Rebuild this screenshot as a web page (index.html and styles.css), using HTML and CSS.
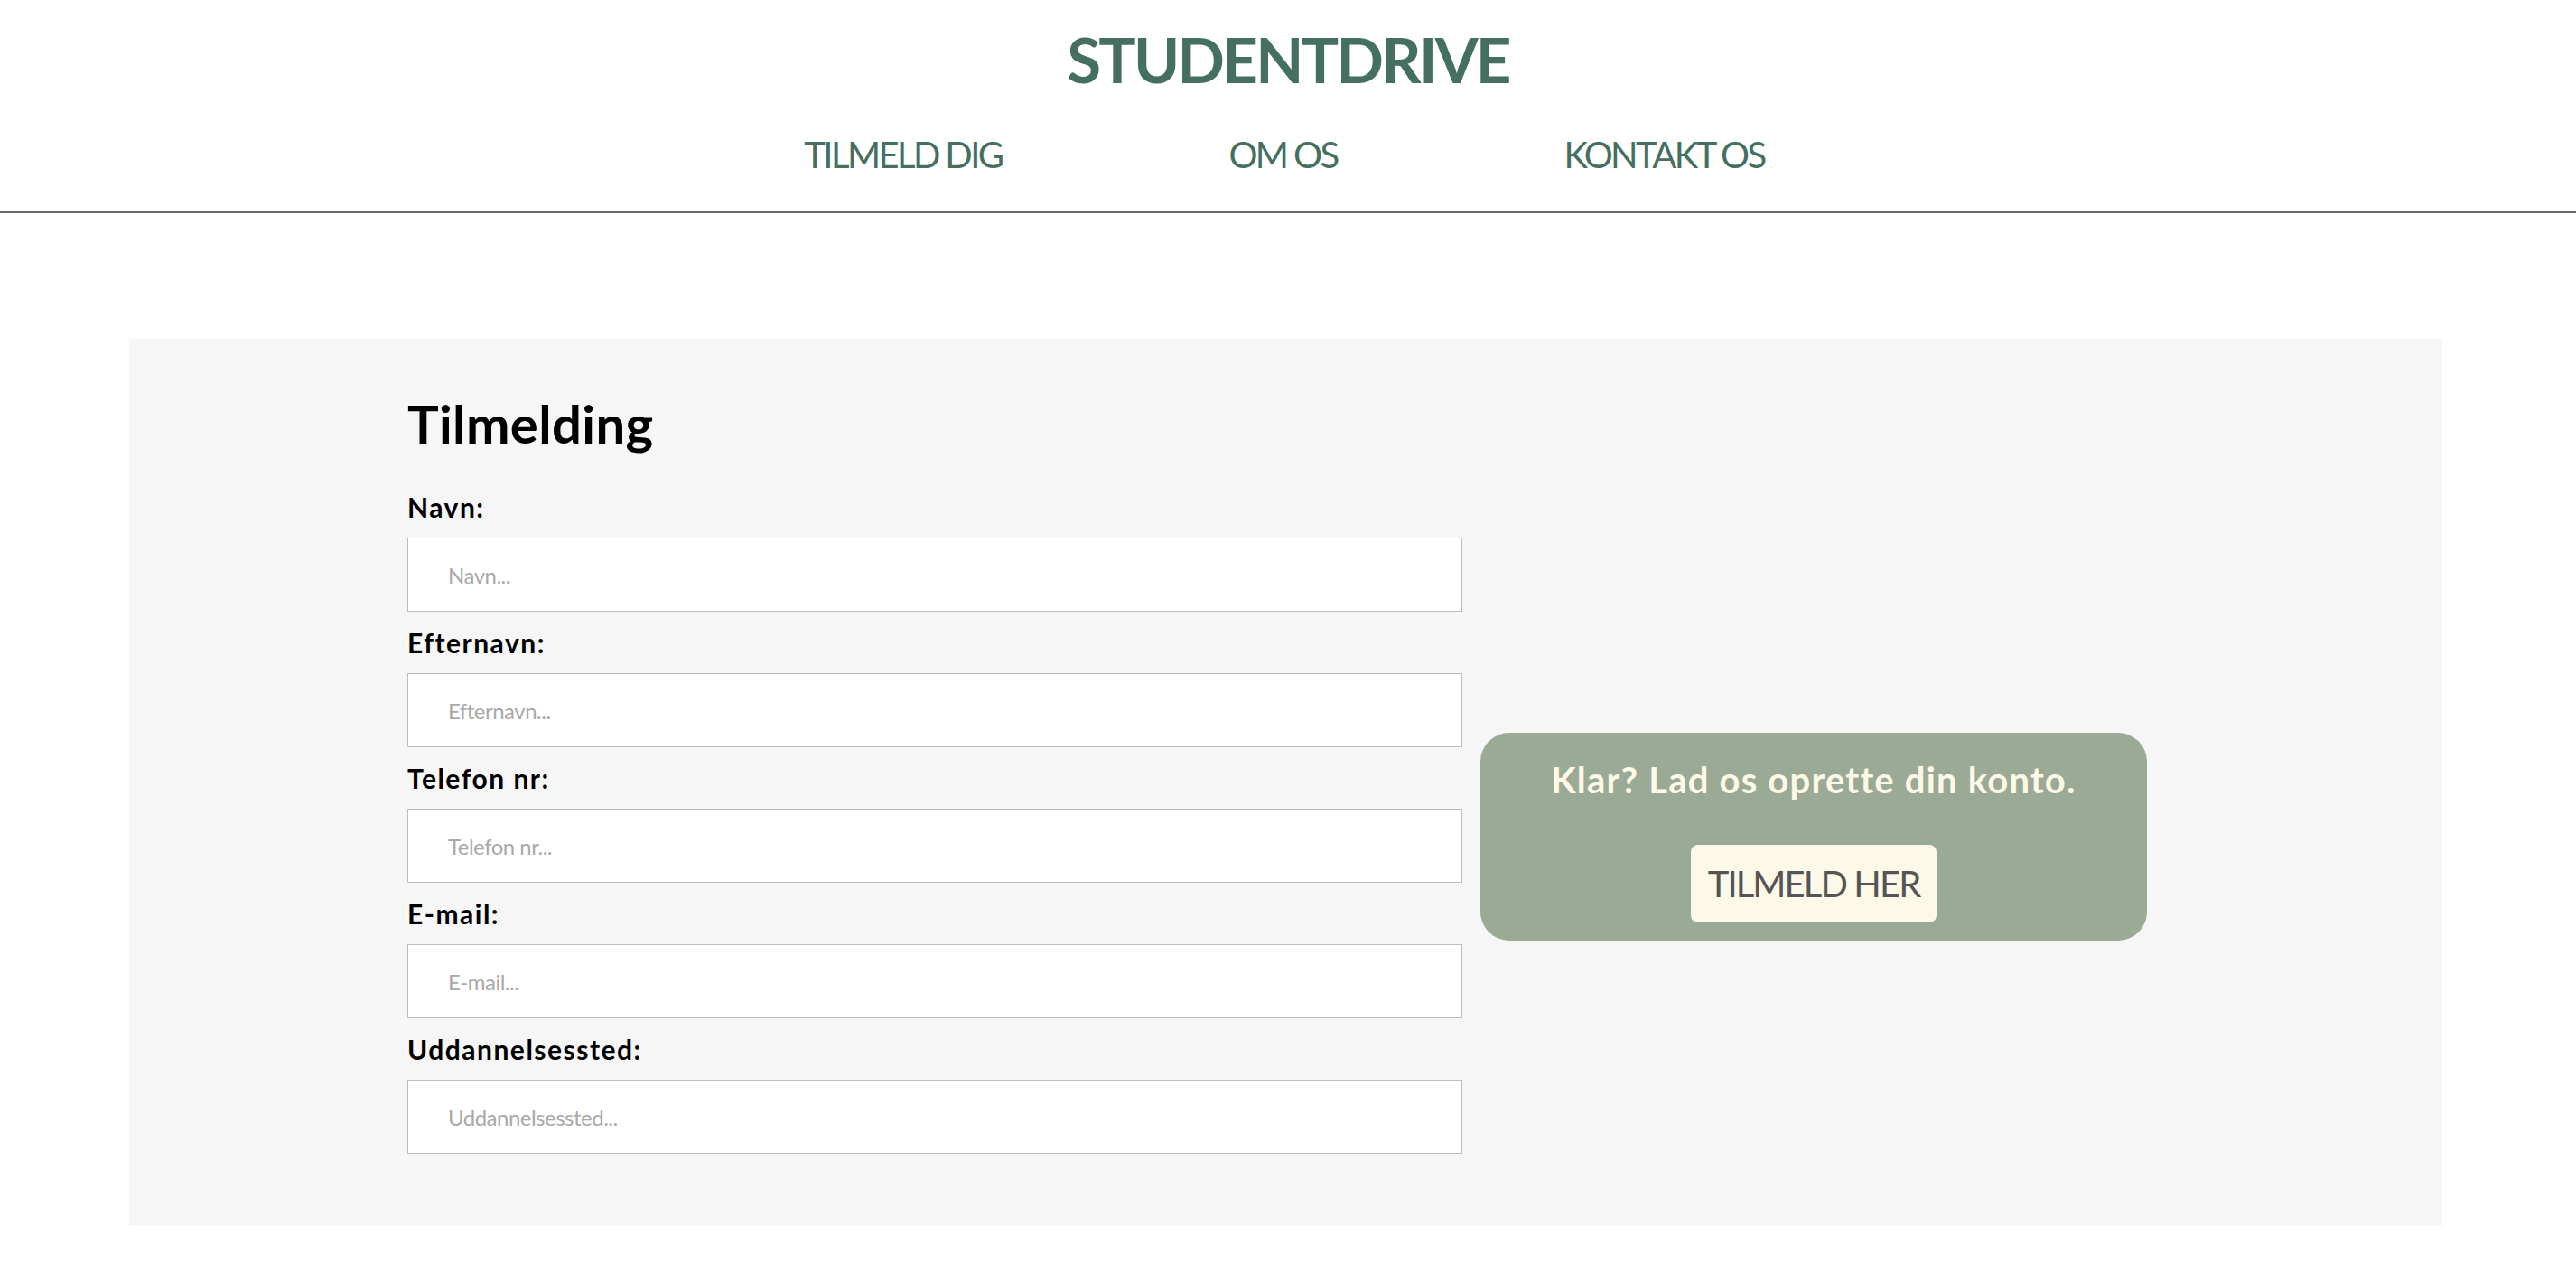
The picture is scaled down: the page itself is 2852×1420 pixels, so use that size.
FILE: index.html
```html
<!DOCTYPE html>
<html lang="da">
<head>
<meta charset="utf-8">
<title>Studentdrive - Tilmelding</title>
<link rel="stylesheet" href="styles.css">
</head>
<body>
<header class="site-header">
  <h1 class="logo">STUDENTDRIVE</h1>
  <nav class="main-nav">
    <a href="#">TILMELD DIG</a>
    <a href="#">OM OS</a>
    <a href="#">KONTAKT OS</a>
  </nav>
</header>
<hr class="divider">
<main class="panel">
  <form class="signup-form">
    <h2 class="form-title">Tilmelding</h2>
    <label class="field-label" for="navn">Navn:</label>
    <input class="field-input" id="navn" type="text" placeholder="Navn...">
    <label class="field-label" for="efternavn">Efternavn:</label>
    <input class="field-input" id="efternavn" type="text" placeholder="Efternavn...">
    <label class="field-label" for="tlf">Telefon nr:</label>
    <input class="field-input" id="tlf" type="text" placeholder="Telefon nr...">
    <label class="field-label" for="email">E-mail:</label>
    <input class="field-input" id="email" type="text" placeholder="E-mail...">
    <label class="field-label" for="sted">Uddannelsessted:</label>
    <input class="field-input" id="sted" type="text" placeholder="Uddannelsessted...">
  </form>
  <section class="cta">
    <p class="cta-text">Klar? Lad os oprette din konto.</p>
    <button class="cta-button" type="button">TILMELD HER</button>
  </section>
</main>
</body>
</html>
```
FILE: styles.css
```css
* { box-sizing: border-box; }
body {
  margin: 0;
  background: #ffffff;
  font-family: "Lato", "DejaVu Sans", sans-serif;
}
.site-header {
  display: flex;
  flex-direction: column;
  align-items: center;
  padding-top: 24px;
}
.logo {
  margin: 0;
  font-size: 69px;
  line-height: 83px;
  font-weight: 700;
  letter-spacing: -2.7px;
  color: #456f5f;
}
.main-nav {
  display: flex;
  justify-content: center;
  gap: 251px;
  margin-top: 40px;
  padding-right: 8px;
}
.main-nav a {
  font-size: 40px;
  line-height: 48px;
  letter-spacing: -2.6px;
  color: #456f5f;
  text-decoration: none;
}
.divider {
  margin: 39px 0 0 0;
  border: 0;
  height: 2px;
  background: #6b6b6b;
}
.panel {
  width: 2561px;
  margin: 139px 0 0 143px;
  background: #f6f6f6;
  display: flex;
  align-items: flex-start;
  gap: 20px;
  padding: 59px 0 80px 308px;
}
.signup-form {
  width: 1168px;
  display: flex;
  flex-direction: column;
}
.form-title {
  margin: 0 0 39px 0;
  font-size: 58px;
  line-height: 70px;
  font-weight: 700;
  letter-spacing: 0.4px;
  color: #000;
}
.field-label {
  font-size: 30px;
  line-height: 36px;
  font-weight: 700;
  letter-spacing: 1.5px;
  color: #000;
  margin-bottom: 16px;
}
.field-input {
  height: 82px;
  width: 100%;
  border: 1px solid #bdbdbd;
  background: #fff;
  padding: 0 44px;
  font-family: "Lato", "DejaVu Sans", sans-serif;
  font-size: 24px;
  letter-spacing: -0.5px;
  color: #333;
  margin-bottom: 16px;
  outline: none;
}
.field-input:last-child { margin-bottom: 0; }
.field-input::placeholder { color: #a9a9a9; }
.cta {
  margin-top: 377px;
  width: 738px;
  height: 230px;
  background: #9baa95;
  border-radius: 32px;
  display: flex;
  flex-direction: column;
  align-items: center;
  padding-top: 28px;
}
.cta-text {
  margin: 0;
  font-size: 40px;
  line-height: 48px;
  font-weight: 700;
  letter-spacing: 1.2px;
  color: #fdf9e6;
}
.cta-button {
  margin-top: 48px;
  width: 272px;
  height: 86px;
  border: 0;
  border-radius: 8px;
  background: #fdf9e8;
  color: #555555;
  font-family: "Lato", "DejaVu Sans", sans-serif;
  font-size: 40px;
  letter-spacing: -1.9px;
  padding: 0;
}
```
